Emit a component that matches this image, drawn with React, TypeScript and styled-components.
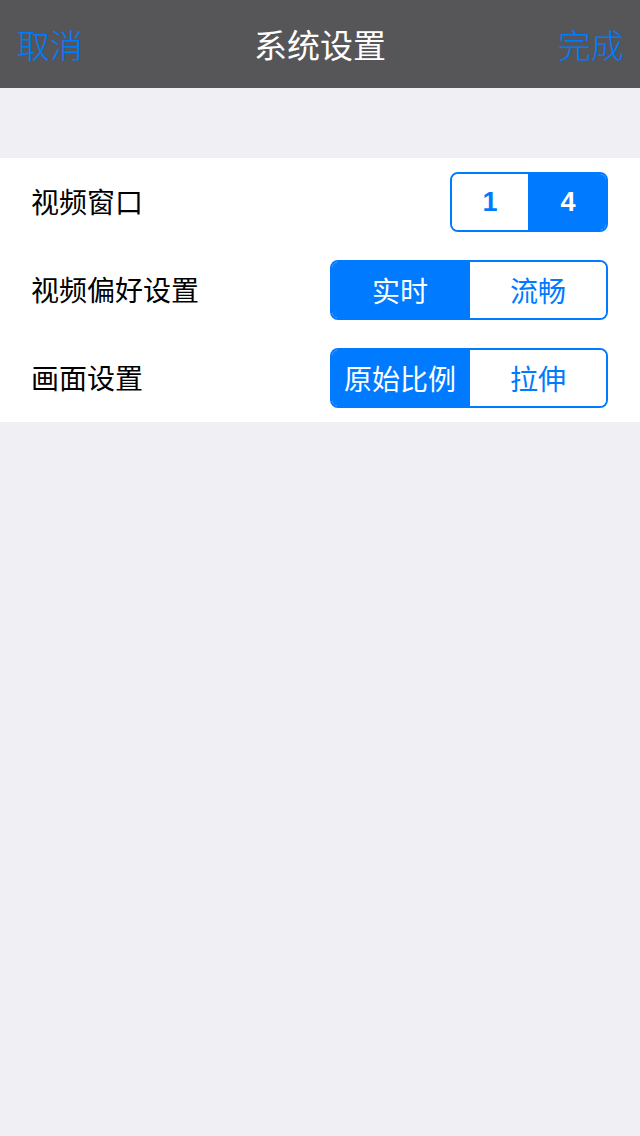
import React from "react";
import styled, { createGlobalStyle } from "styled-components";

const Global = createGlobalStyle`
  html, body { margin: 0; padding: 0; background: #efeff4; }
  body { font-family: "Noto Sans CJK SC", "Noto Sans", sans-serif; }
  #root { min-height: 1136px; }
`;

const Page = styled.div`
  width: 640px;
  min-height: 1136px;
  background: #efeff4;
  display: flex;
  flex-direction: column;
`;

const NavBar = styled.header`
  height: 88px;
  background: #565658;
  display: flex;
  align-items: center;
  justify-content: space-between;
  padding: 0 16px 0 17px;
  position: relative;
`;

const NavButton = styled.span`
  color: #007aff;
  font-size: 33px;
  font-weight: 300;
  line-height: 1;
`;

const NavTitle = styled.h1`
  position: absolute;
  left: 0;
  right: 0;
  text-align: center;
  margin: 0;
  color: #ffffff;
  font-size: 33px;
  font-weight: 400;
  line-height: 1;
  pointer-events: none;
`;

const Section = styled.section`
  margin-top: 70px;
  background: #ffffff;
  display: flex;
  flex-direction: column;
`;

const Row = styled.div`
  height: 88px;
  display: flex;
  align-items: center;
  justify-content: space-between;
  padding: 0 32px 0 31px;
`;

const Label = styled.span`
  font-size: 28px;
  line-height: 1;
  color: #000;
  position: relative;
  top: -1px;
`;

const Segmented = styled.div<{ $width: number }>`
  width: ${(p) => p.$width}px;
  height: 60px;
  box-sizing: border-box;
  border: 2px solid #007aff;
  border-radius: 8px;
  overflow: hidden;
  display: flex;
`;

const Segment = styled.div<{ $active: boolean; $digit: boolean }>`
  flex: 1;
  display: flex;
  align-items: center;
  justify-content: center;
  background: ${(p) => (p.$active ? "#007aff" : "#ffffff")};
  color: ${(p) => (p.$active ? "#ffffff" : "#007aff")};
  font-family: ${(p) =>
    p.$digit ? '"Liberation Sans", Arial, sans-serif' : '"Noto Sans CJK SC", sans-serif'};
  font-size: ${(p) => (p.$digit ? "27px" : "28px")};
  font-weight: ${(p) => (p.$digit ? 700 : 400)};
  line-height: 1;
  & + & {
    border-left: 2px solid #007aff;
  }
`;

const rows = [
  { label: "视频窗口", width: 158, options: ["1", "4"], active: 1 },
  { label: "视频偏好设置", width: 278, options: ["实时", "流畅"], active: 0 },
  { label: "画面设置", width: 278, options: ["原始比例", "拉伸"], active: 0 },
];

export default function App() {
  return (
    <>
      <Global />
      <Page>
        <NavBar>
          <NavButton>取消</NavButton>
          <NavTitle>系统设置</NavTitle>
          <NavButton>完成</NavButton>
        </NavBar>
        <Section>
          {rows.map((r) => (
            <Row key={r.label}>
              <Label>{r.label}</Label>
              <Segmented $width={r.width}>
                {r.options.map((o, i) => (
                  <Segment key={o} $active={i === r.active} $digit={/^\d+$/.test(o)}>
                    {o}
                  </Segment>
                ))}
              </Segmented>
            </Row>
          ))}
        </Section>
      </Page>
    </>
  );
}
